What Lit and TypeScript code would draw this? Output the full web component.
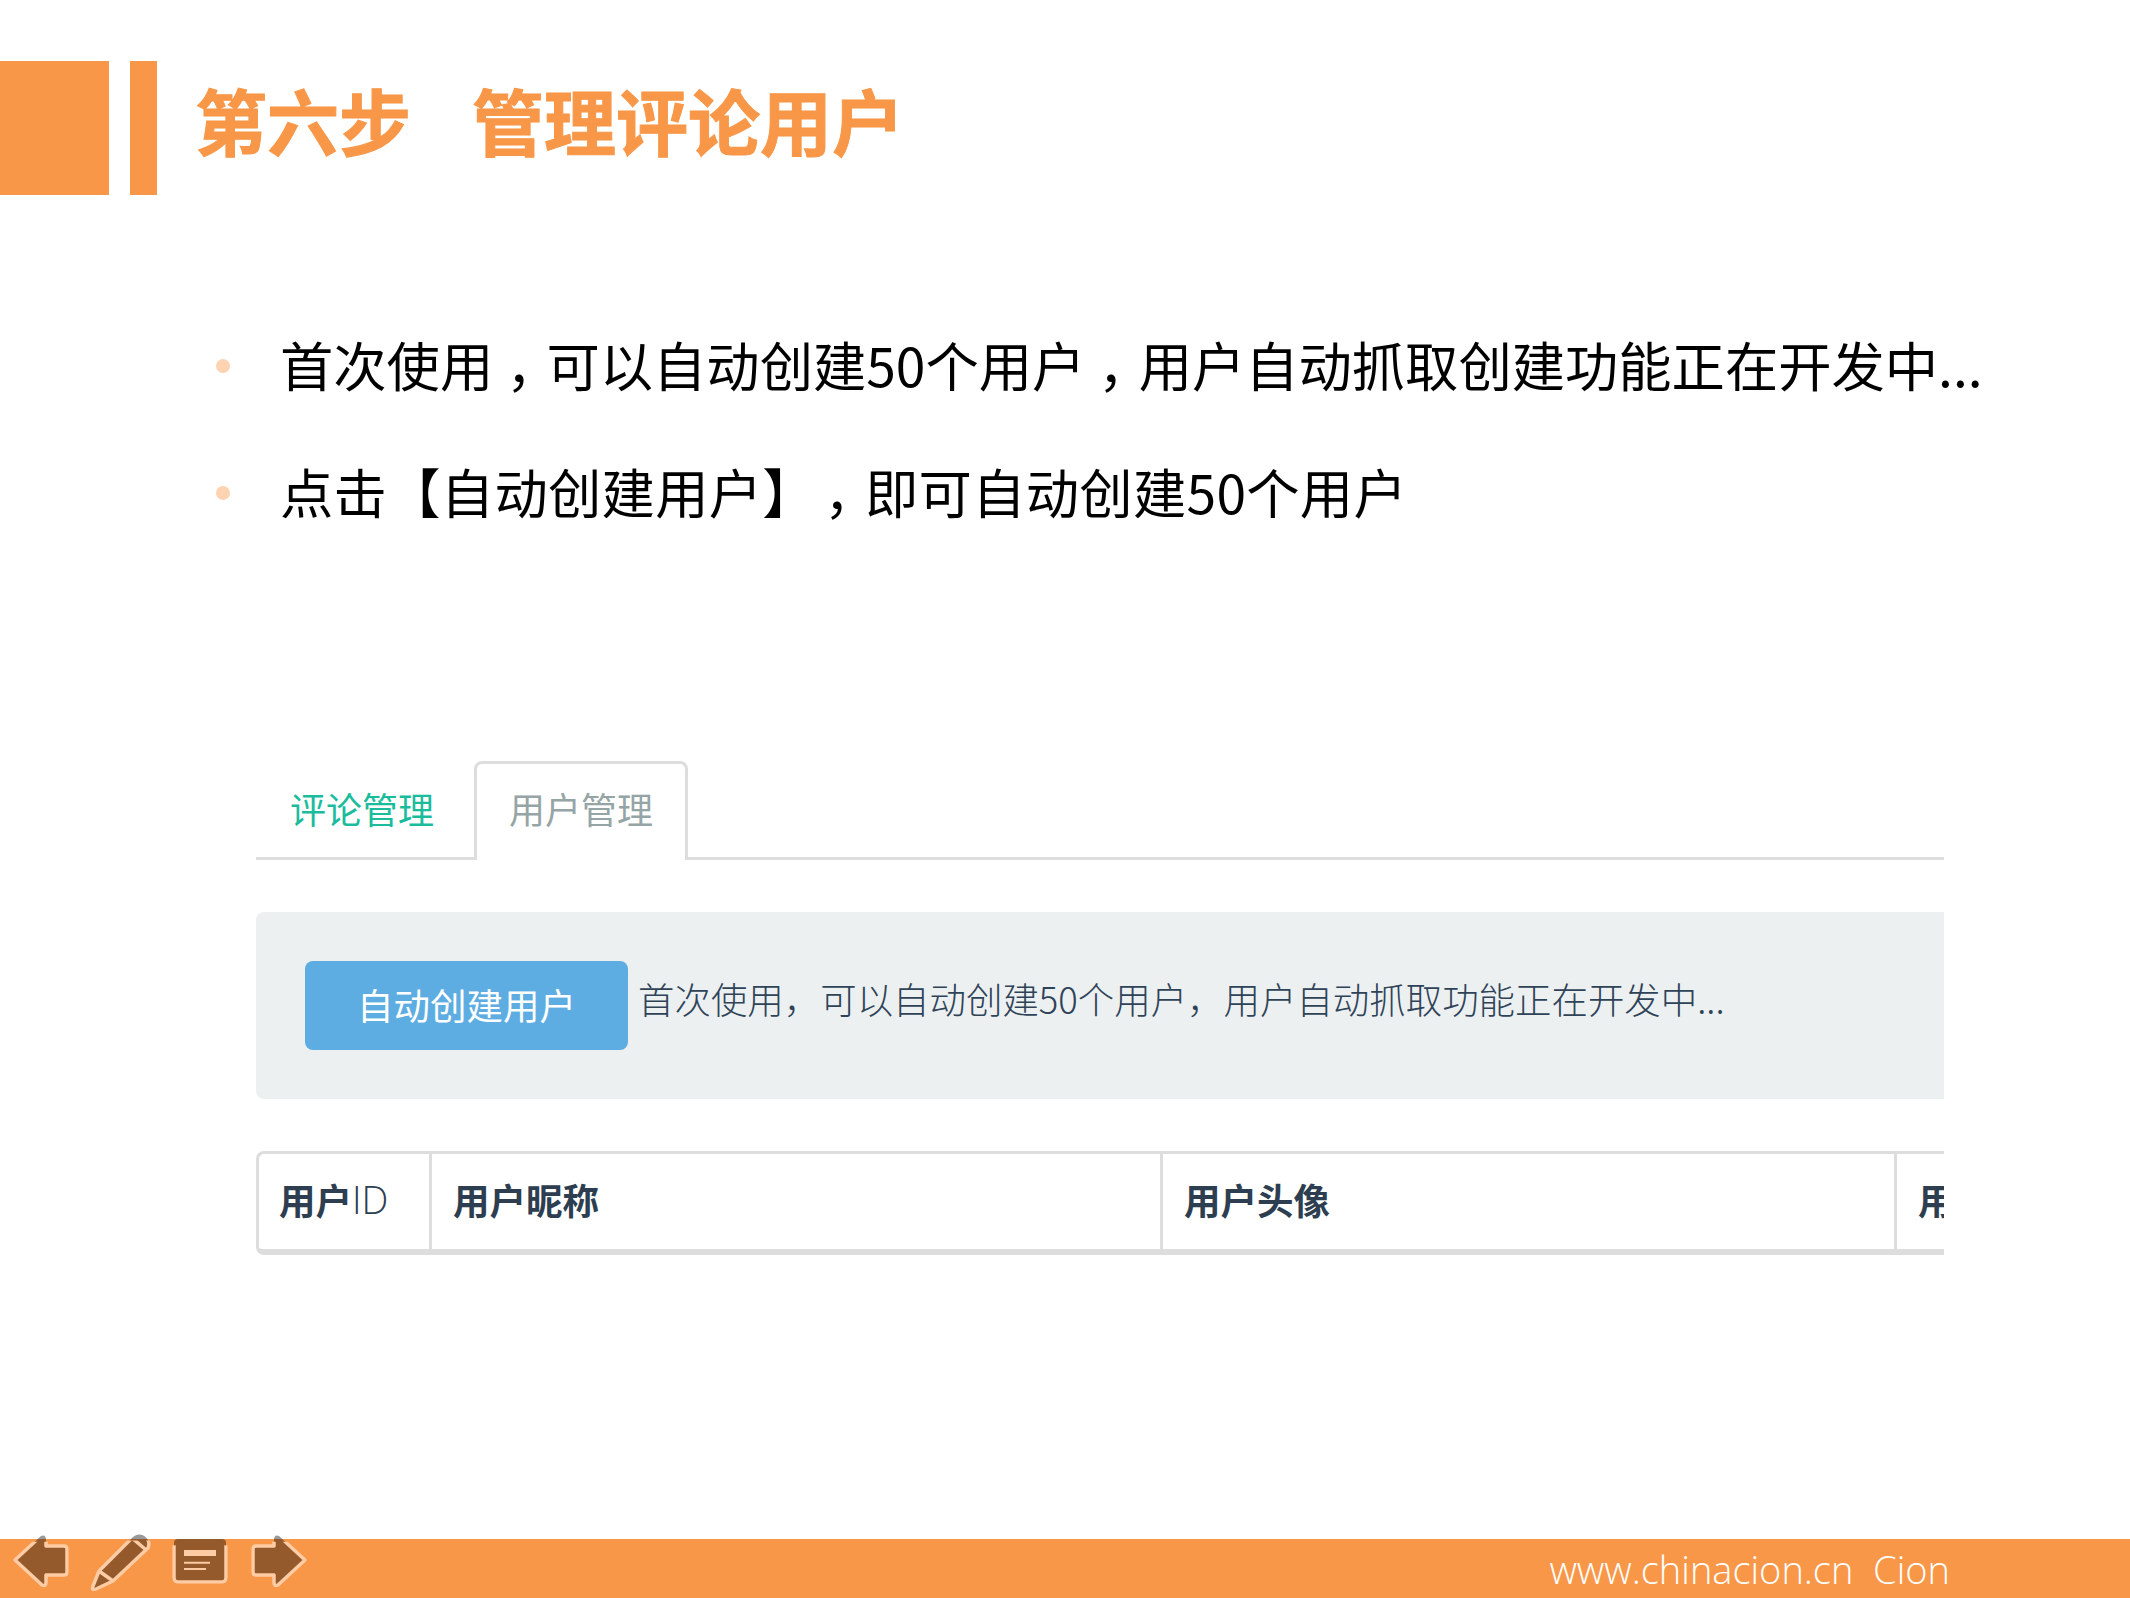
import { LitElement, html, css } from "lit";
import { customElement } from "lit/decorators.js";

@customElement("app-root")
export class AppRoot extends LitElement {
  static styles = css`
    :host { display: block; width: 2130px; height: 1598px; background: #fff; font-family: "Noto Sans CJK SC", "Noto Sans", sans-serif; }
    .page { display: flex; flex-direction: column; height: 1598px; overflow: hidden; }
    .head { display: flex; align-items: stretch; height: 134px; margin-top: 61px; flex: none; }
    .b1 { width: 109px; background: #f89748; }
    .b2 { width: 27px; margin-left: 21px; background: #f89748; }
    .title { margin: 0 0 19px 38px; align-self: center; font-size: 72px; font-weight: 700; color: #f89748; white-space: pre; line-height: 1; word-spacing: 4px; -webkit-text-stroke: 1px #f89748; }
    .list { list-style: none; margin: 105px 0 0; padding: 0 0 0 216px; flex: none; }
    .list li { display: flex; align-items: center; height: 127px; font-size: 53.3px; color: #000; white-space: pre; }
    .list li.wide { letter-spacing: .3px; }
    .dot { width: 14px; height: 14px; border-radius: 50%; background: #fdd3b1; margin: 5px 50px 0 0; flex: none; }
    .cm { margin-left: .24em; margin-right: -.24em; }
    .gap { margin-left: calc(.24em + 22px); }
    .shot { margin: 207px 0 0 256px; width: 1688px; overflow: hidden; flex: none; }
    .tabs { display: flex; height: 99px; box-sizing: border-box; border-bottom: 3px solid #ddd; }
    .tab { font-size: 36px; }
    .tab.a { width: 218px; padding-left: 34px; box-sizing: border-box; color: #1abc9c; line-height: 94px; }
    .tab.b { width: 214px; height: 99px; box-sizing: border-box; border: 3px solid #ddd; border-bottom: 0; border-radius: 8px 8px 0 0; background: #fff; color: #95a5a6; text-align: center; line-height: 88px; }
    .panel { margin-top: 52px; height: 187px; background: #ecf0f1; border-radius: 8px 0 0 8px; display: flex; align-items: center; padding-left: 49px; }
    .btn { width: 323px; height: 89px; background: #5dade2; border-radius: 8px; color: #fff; font-size: 36.5px; display: flex; align-items: center; justify-content: center; flex: none; padding-bottom: 3px; box-sizing: border-box; }
    .note { margin-left: 10px; font-size: 36.45px; color: #2f4358; white-space: pre; position: relative; top: -8px; font-weight: 300; }
    .table { margin-top: 52px; height: 104px; box-sizing: border-box; border: 3px solid #ddd; border-bottom-width: 6px; border-right: 0; border-radius: 8px 0 0 8px; display: grid; grid-template-columns: 170px 731px 734px 1fr; }
    .cell { border-left: 3px solid #ddd; padding: 0 0 5px 21px; font-size: 36.5px; font-weight: 700; color: #2c3e50; display: flex; align-items: center; white-space: pre; overflow: hidden; }
    .cell:first-child { border-left: 0; padding-left: 20px; }
    .id { font-weight: 300; font-family: "Open Sans", sans-serif; font-size: 38px; }
    .foot { position: relative; margin-top: auto; height: 59px; background: #f89748; flex: none; display: flex; justify-content: flex-end; align-items: center; padding-right: 180px; }
    .site { color: #fff; font: 300 38px "Open Sans", "Noto Sans", sans-serif; white-space: pre; }
    .nav { position: absolute; left: 8px; top: -8px; display: flex; gap: 16px; }
    .nav svg { width: 64px; height: 62px; display: block; }
    .f { fill: rgba(0, 0, 0, .4); }
    .s { fill: none; stroke: #fdcba4; stroke-width: 3.5; stroke-linejoin: round; stroke-linecap: round; clip-path: inset(8px 0 0 0); }
    .l { stroke: #fdcba4; fill: none; }
  `;

  render() {
    const arrow = "M7 29 L33 5 Q38 3 38 9 V15 H56 Q59 15 59 18 V41 Q59 44 56 44 H38 V51 Q38 56 34 54 Z";
    const pencil = "M5 55 L11 40 L45 6 A9.500 9.500 0 0 1 60 17 L25 50 L8 58 Q3 60 5 55 Z";
    return html`
      <div class="page">
        <div class="head">
          <div class="b1"></div><div class="b2"></div>
          <div class="title">第六步   管理评论用户</div>
        </div>
        <ul class="list">
          <li><span class="dot"></span><span>首次使用<span class="cm">，</span>可以自动创建50个用户<span class="cm">，</span>用户自动抓取创建功能正在开发中...</span></li>
          <li class="wide"><span class="dot"></span><span>点击【自动创建用户】<span class="cm gap">，</span>即可自动创建50个用户</span></li>
        </ul>
        <div class="shot">
          <div class="tabs">
            <div class="tab a">评论管理</div>
            <div class="tab b">用户管理</div>
          </div>
          <div class="panel">
            <div class="btn">自动创建用户</div>
            <div class="note">首次使用，可以自动创建50个用户，用户自动抓取功能正在开发中...</div>
          </div>
          <div class="table">
            <div class="cell">用户<span class="id">ID</span></div>
            <div class="cell">用户昵称</div>
            <div class="cell">用户头像</div>
            <div class="cell">用户状态</div>
          </div>
        </div>
        <div class="foot">
          <div class="nav">
            <svg viewBox="0 0 64 62"><path class="f" d="${arrow}"/><path class="s" d="${arrow}"/></svg>
            <svg viewBox="0 0 64 62"><path class="f" d="${pencil}"/><path class="s" d="${pencil} M11 40 L25 50 M44 7 L57 18"/></svg>
            <svg viewBox="0 0 64 62"><rect class="f" x="6" y="8" width="52" height="43" rx="4"/><rect class="s" x="6" y="8" width="52" height="43" rx="4"/>
              <path class="l" stroke-width="6" d="M16 22 H48"/><path class="l" stroke-width="2" d="M16 31.700 H42 M16 38 H38"/></svg>
            <svg viewBox="0 0 64 62"><g transform="translate(64 0) scale(-1 1)"><path class="f" d="${arrow}"/><path class="s" d="${arrow}"/></g></svg>
          </div>
          <div class="site">www.chinacion.cn  Cion</div>
        </div>
      </div>
    `;
  }
}
